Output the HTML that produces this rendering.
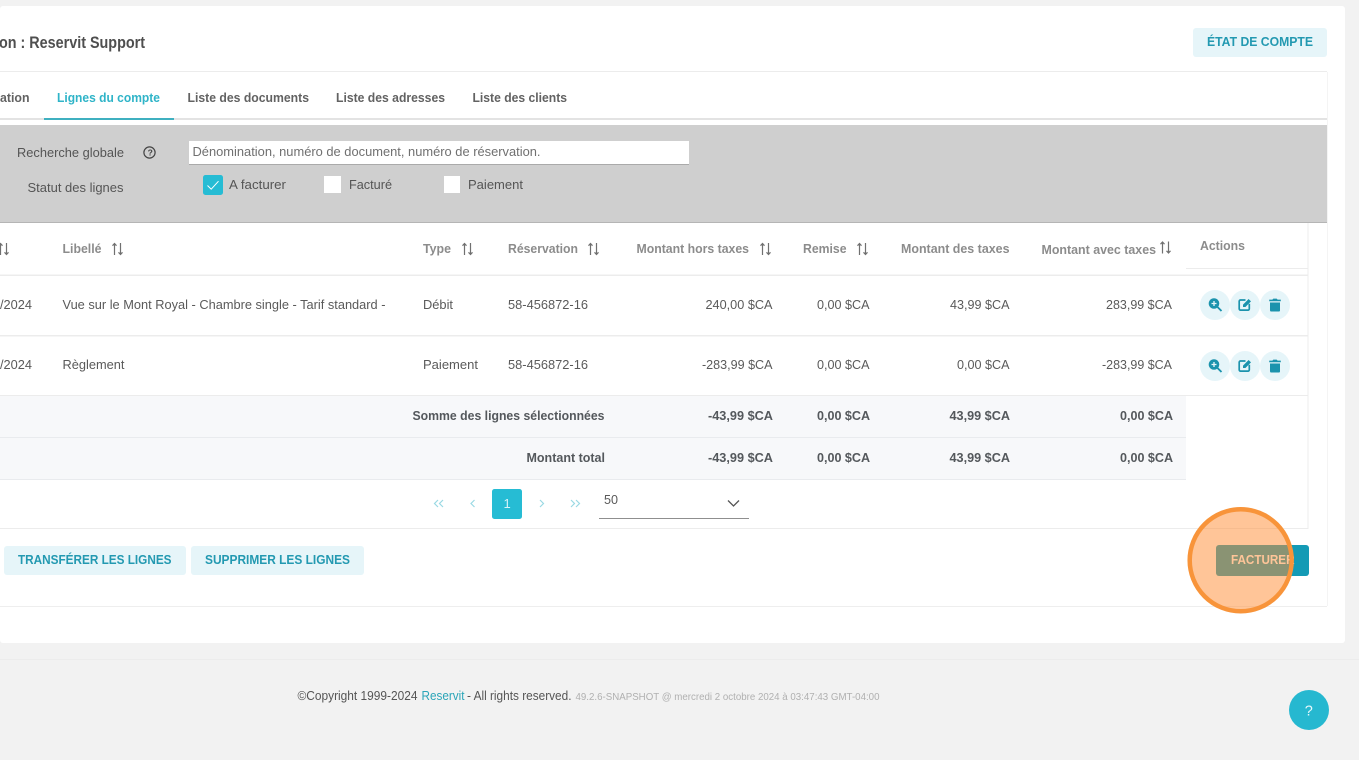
<!DOCTYPE html>
<html lang="fr"><head><meta charset="utf-8"><title>Lignes du compte</title>
<style>
html,body{margin:0;padding:0;background:#f2f2f2;width:1359px;height:760px;overflow:hidden}
svg{display:block}
text{font-family:"Liberation Sans",sans-serif;font-size:13px;fill:#5a5a5a;white-space:pre}
.b{font-weight:bold}
.tab{font-weight:bold;fill:#626262;font-size:12.8px}
.h{font-weight:bold;fill:#8c8c8c;font-size:12.8px}
.s{font-weight:bold;fill:#54585c;font-size:12.8px}
.btn{font-weight:bold;fill:#2399b1;font-size:13.2px}
.sort{fill:none;stroke:#707070;stroke-width:1.2}
</style></head><body>
<svg width="1359" height="760" viewBox="0 0 1359 760" xmlns="http://www.w3.org/2000/svg">
<defs>
<g id="sort" class="sort"><path d="M3.5 12.500V1M1.500 3.200 3.500 1 5.500 3.200M9.500 .5v11.500M7.500 9.800 9.500 12 11.500 9.800"/></g>
<g id="acts">
<circle cx="15" cy="15" r="15" fill="#e6f5f9"/><circle cx="45" cy="15" r="15" fill="#e6f5f9"/><circle cx="75" cy="15" r="15" fill="#e6f5f9"/>
<circle cx="14" cy="13.500" r="5.300" fill="#1b93ad"/><path d="M11.500 13.500h5M14 11v5" stroke="#e6f5f9" stroke-width="1.300"/><path d="M17.500 17l4 4" stroke="#1b93ad" stroke-width="1.900"/>
<path d="M45.500 10h-5a1.300 1.300 0 0 0-1.300 1.300v7.500a1.300 1.300 0 0 0 1.300 1.300h7.500a1.300 1.300 0 0 0 1.300-1.300v-5" fill="none" stroke="#1b93ad" stroke-width="1.700"/>
<path d="M43 14.600l5.600-5.600 2.400 2.400-5.600 5.600H43z" fill="#1b93ad"/>
<path d="M70 12.500h10v7.700a1.300 1.300 0 0 1-1.300 1.300h-7.400a1.300 1.300 0 0 1-1.300-1.300zM69.200 9.600h3.200l.9-1h3.400l.9 1h3.200v1.700H69.200z" fill="#1b93ad"/>
</g>
</defs>

<rect x="0" y="6" width="1345" height="637" rx="3" fill="#fff"/>
<rect x="0" y="606" width="1327" height="1" fill="#eeeeee"/>
<rect x="1327" y="72" width="1" height="534" fill="#f4f4f4"/>
<rect x="0" y="71" width="1327" height="1" fill="#ececec"/>

<text x="-1" y="48" style="font-size:17px;font-weight:bold;fill:#4f4f4f" textLength="146" lengthAdjust="spacingAndGlyphs">on : Reservit Support</text>
<rect x="1193" y="28" width="134" height="29" rx="3" fill="#e6f5f9"/>
<text x="1207" y="46" class="btn" textLength="106" lengthAdjust="spacingAndGlyphs">ÉTAT DE COMPTE</text>

<rect x="0" y="118" width="1327" height="2" fill="#e3e3e3"/>
<rect x="44" y="118" width="130" height="2" fill="#3fb0c0"/>
<text x="0" y="102" class="tab" textLength="29.500" lengthAdjust="spacingAndGlyphs">ation</text>
<text x="57" y="102" class="tab" style="fill:#2fb4c8" textLength="103" lengthAdjust="spacingAndGlyphs">Lignes du compte</text>
<text x="187.500" y="102" class="tab" textLength="121.500" lengthAdjust="spacingAndGlyphs">Liste des documents</text>
<text x="336" y="102" class="tab" textLength="109" lengthAdjust="spacingAndGlyphs">Liste des adresses</text>
<text x="472.500" y="102" class="tab" textLength="94.500" lengthAdjust="spacingAndGlyphs">Liste des clients</text>

<rect x="0" y="125" width="1327" height="97" fill="#cfcfcf"/>
<rect x="0" y="222" width="1327" height="1" fill="#b5b5b5"/>
<text x="17" y="157" textLength="107" lengthAdjust="spacingAndGlyphs" style="fill:#555">Recherche globale</text>
<circle cx="149.500" cy="152.500" r="5.600" fill="none" stroke="#444" stroke-width="1.200"/>
<text x="147.600" y="155.600" style="font-size:8.500px;font-weight:bold;fill:#444">?</text>
<rect x="189" y="141" width="500" height="23" fill="#fff"/><rect x="189" y="164" width="500" height="1" fill="#aaa"/>
<text x="192.500" y="156" textLength="348" lengthAdjust="spacingAndGlyphs" style="fill:#707070">Dénomination, numéro de document, numéro de réservation.</text>
<text x="27.500" y="192" textLength="96" lengthAdjust="spacingAndGlyphs" style="fill:#555">Statut des lignes</text>
<rect x="203" y="175" width="20" height="20" rx="2.500" fill="#26bcd4"/>
<path d="M207.500 185.500l3.700 3.700 7.300-8" fill="none" stroke="#fff" stroke-width="1"/>
<text x="229" y="189" textLength="57" lengthAdjust="spacingAndGlyphs" style="fill:#555">A facturer</text>
<rect x="324" y="176" width="17" height="17" fill="#fff"/>
<text x="349" y="189" textLength="43" lengthAdjust="spacingAndGlyphs" style="fill:#555">Facturé</text>
<rect x="444" y="176" width="16" height="17" fill="#fff"/>
<text x="468" y="189" textLength="55" lengthAdjust="spacingAndGlyphs" style="fill:#555">Paiement</text>

<!-- table frame -->
<rect x="1307.500" y="223" width="1" height="306" fill="#ececec"/>
<rect x="0" y="528" width="1308" height="1" fill="#ececec"/>
<rect x="0" y="274.500" width="1308" height="1.500" fill="#ececec"/>
<rect x="1186" y="268" width="122" height="1" fill="#ececec"/>
<rect x="0" y="335" width="1308" height="1.500" fill="#ececec"/>
<rect x="0" y="395" width="1308" height="1" fill="#ececec"/>
<rect x="0" y="396" width="1186" height="83" fill="#f7f8fa"/>
<rect x="0" y="437" width="1186" height="1" fill="#e9ebee"/>
<rect x="0" y="479" width="1186" height="1" fill="#e9ebee"/>

<use href="#sort" x="-3" y="242.500"/>
<text x="62.500" y="253" class="h" textLength="39" lengthAdjust="spacingAndGlyphs">Libellé</text><use href="#sort" x="111" y="242.500"/>
<text x="423" y="253" class="h" textLength="28" lengthAdjust="spacingAndGlyphs">Type</text><use href="#sort" x="461" y="242.500"/>
<text x="508" y="253" class="h" textLength="70" lengthAdjust="spacingAndGlyphs">Réservation</text><use href="#sort" x="587" y="242.500"/>
<text x="636.500" y="253" class="h" textLength="112.500" lengthAdjust="spacingAndGlyphs">Montant hors taxes</text><use href="#sort" x="759" y="242.500"/>
<text x="803" y="253" class="h" textLength="43.500" lengthAdjust="spacingAndGlyphs">Remise</text><use href="#sort" x="856" y="242.500"/>
<text x="901" y="253" class="h" textLength="108.500" lengthAdjust="spacingAndGlyphs">Montant des taxes</text>
<text x="1041.500" y="254" class="h" textLength="114.500" lengthAdjust="spacingAndGlyphs">Montant avec taxes</text><use href="#sort" x="1159" y="241"/>
<text x="1200" y="250" class="h" textLength="45" lengthAdjust="spacingAndGlyphs">Actions</text>

<text x="0" y="309" textLength="32" lengthAdjust="spacingAndGlyphs">/2024</text>
<text x="62.500" y="309" textLength="323" lengthAdjust="spacingAndGlyphs">Vue sur le Mont Royal - Chambre single - Tarif standard -</text>
<text x="423" y="309" textLength="30" lengthAdjust="spacingAndGlyphs">Débit</text>
<text x="508" y="309" textLength="80" lengthAdjust="spacingAndGlyphs">58-456872-16</text>
<text x="705.500" y="309" textLength="67" lengthAdjust="spacingAndGlyphs">240,00 $CA</text>
<text x="817" y="309" textLength="52.500" lengthAdjust="spacingAndGlyphs">0,00 $CA</text>
<text x="950" y="309" textLength="59.500" lengthAdjust="spacingAndGlyphs">43,99 $CA</text>
<text x="1106" y="309" textLength="66" lengthAdjust="spacingAndGlyphs">283,99 $CA</text>
<use href="#acts" x="1200" y="290"/>

<text x="0" y="369" textLength="32" lengthAdjust="spacingAndGlyphs">/2024</text>
<text x="62.500" y="369" textLength="62" lengthAdjust="spacingAndGlyphs">Règlement</text>
<text x="423" y="369" textLength="55" lengthAdjust="spacingAndGlyphs">Paiement</text>
<text x="508" y="369" textLength="80" lengthAdjust="spacingAndGlyphs">58-456872-16</text>
<text x="702" y="369" textLength="70.500" lengthAdjust="spacingAndGlyphs">-283,99 $CA</text>
<text x="817" y="369" textLength="52.500" lengthAdjust="spacingAndGlyphs">0,00 $CA</text>
<text x="957" y="369" textLength="52.500" lengthAdjust="spacingAndGlyphs">0,00 $CA</text>
<text x="1102" y="369" textLength="70" lengthAdjust="spacingAndGlyphs">-283,99 $CA</text>
<use href="#acts" x="1200" y="351"/>

<text x="412.500" y="420" class="s" textLength="192" lengthAdjust="spacingAndGlyphs">Somme des lignes sélectionnées</text>
<text x="708" y="420" class="s" textLength="65" lengthAdjust="spacingAndGlyphs">-43,99 $CA</text>
<text x="817" y="420" class="s" textLength="53" lengthAdjust="spacingAndGlyphs">0,00 $CA</text>
<text x="949.500" y="420" class="s" textLength="60.500" lengthAdjust="spacingAndGlyphs">43,99 $CA</text>
<text x="1120" y="420" class="s" textLength="53" lengthAdjust="spacingAndGlyphs">0,00 $CA</text>
<text x="526.500" y="462" class="s" textLength="78.500" lengthAdjust="spacingAndGlyphs">Montant total</text>
<text x="708" y="462" class="s" textLength="65" lengthAdjust="spacingAndGlyphs">-43,99 $CA</text>
<text x="817" y="462" class="s" textLength="53" lengthAdjust="spacingAndGlyphs">0,00 $CA</text>
<text x="949.500" y="462" class="s" textLength="60.500" lengthAdjust="spacingAndGlyphs">43,99 $CA</text>
<text x="1120" y="462" class="s" textLength="53" lengthAdjust="spacingAndGlyphs">0,00 $CA</text>

<!-- pagination -->
<g fill="none" stroke="#9ad9e4" stroke-width="1.200">
<path d="M438 500l-3.500 3.500 3.500 3.500M443 500l-3.500 3.500 3.500 3.500"/>
<path d="M474.500 500l-3.500 3.500 3.500 3.500"/>
<path d="M540 500l3.500 3.500-3.500 3.500"/>
<path d="M571 500l3.500 3.500-3.500 3.500M576 500l3.500 3.500-3.500 3.500"/>
</g>
<rect x="492" y="489" width="30" height="30" rx="2.500" fill="#26bcd4"/>
<text x="503.500" y="508" style="font-size:13px;fill:#d8f3f8">1</text>
<text x="604" y="504" textLength="14" lengthAdjust="spacingAndGlyphs">50</text>
<path d="M728 500.500l5.500 5.500 5.500-5.500" fill="none" stroke="#555" stroke-width="1.300"/>
<rect x="599" y="518" width="150" height="1" fill="#8f8f8f"/>

<!-- buttons -->
<rect x="4" y="546" width="182" height="29" rx="3" fill="#e6f5f9"/>
<text x="18" y="564" class="btn" textLength="153.500" lengthAdjust="spacingAndGlyphs">TRANSFÉRER LES LIGNES</text>
<rect x="191" y="546" width="173" height="29" rx="3" fill="#e6f5f9"/>
<text x="205" y="564" class="btn" textLength="145" lengthAdjust="spacingAndGlyphs">SUPPRIMER LES LIGNES</text>
<rect x="1216" y="545" width="93" height="31" rx="3" fill="#149ab5"/>
<text x="1231" y="564" class="b" style="fill:#fff;font-size:13px" textLength="63.500" lengthAdjust="spacingAndGlyphs">FACTURER</text>
<circle cx="1240.700" cy="560.300" r="51" fill="#ff8c32" fill-opacity=".5" stroke="#f8943a" stroke-width="4.500"/>

<!-- footer -->
<rect x="0" y="659" width="1359" height="1" fill="#ececec"/>
<text x="297.500" y="700" style="font-size:12.500px;fill:#555" textLength="120" lengthAdjust="spacingAndGlyphs">©Copyright 1999-2024</text>
<text x="421.500" y="700" style="font-size:12.500px;fill:#2ba5b8" textLength="43" lengthAdjust="spacingAndGlyphs">Reservit</text>
<text x="467" y="700" style="font-size:12.500px;fill:#555" textLength="104.500" lengthAdjust="spacingAndGlyphs">- All rights reserved.</text>
<text x="575.500" y="700" style="font-size:9.800px;fill:#b0b0b0" textLength="304" lengthAdjust="spacingAndGlyphs">49.2.6-SNAPSHOT @ mercredi 2 octobre 2024 à 03:47:43 GMT-04:00</text>
<circle cx="1309" cy="710" r="20" fill="#26b8d0"/>
<text x="1304.800" y="715.500" style="font-size:14.500px;fill:#e6f8fb">?</text>
</svg>
</body></html>
